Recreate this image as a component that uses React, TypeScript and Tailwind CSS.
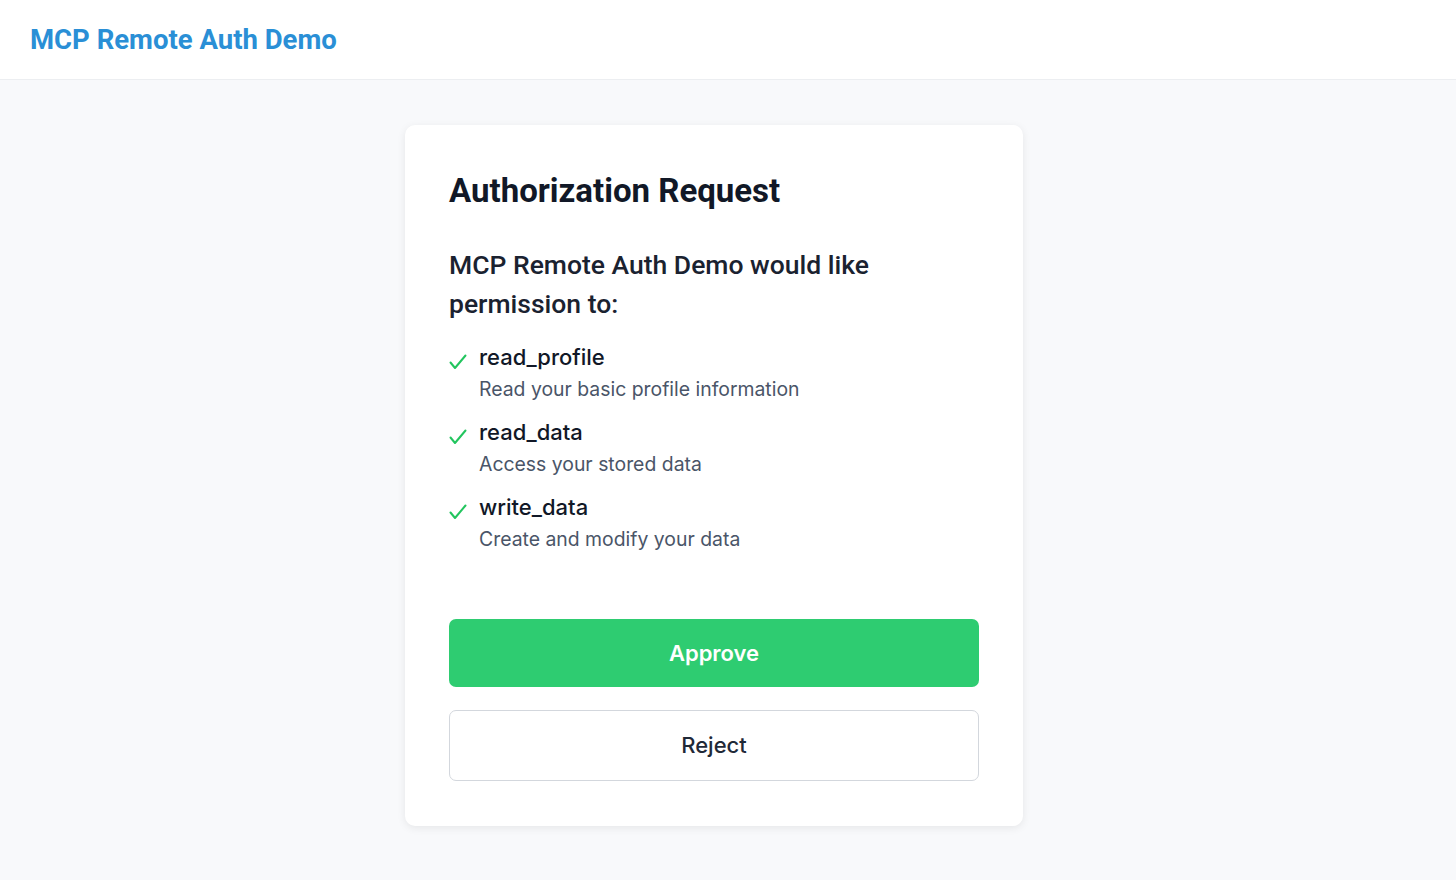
const scopes = [
  { name: "read_profile", description: "Read your basic profile information" },
  { name: "read_data", description: "Access your stored data" },
  { name: "write_data", description: "Create and modify your data" },
];

function Check() {
  return (
    <svg
      viewBox="0 0 18 16"
      className="h-[16px] w-[18px] text-[#22c55e]"
      fill="none"
      stroke="currentColor"
      strokeWidth="2"
      strokeLinecap="round"
      strokeLinejoin="round"
    >
      <polyline points="1.5,8.5 6,14 16.5,1.5" />
    </svg>
  );
}

export default function App() {
  return (
    <div className="min-h-screen bg-[#f8f9fb] font-['Inter',sans-serif]">
      <header className="h-[80px] bg-white border-b border-[#eceef1] flex items-center px-[30px]">
        <h1 className="font-['Roboto',sans-serif] font-bold text-[27.5px] text-[#2a8fd6]">
          MCP Remote Auth Demo
        </h1>
      </header>

      <main className="flex justify-center pt-[45px] pr-[28px]">
        <div className="w-[618px] bg-white rounded-[10px] shadow-[0_2px_8px_rgba(0,0,0,0.08)] px-[44px] pt-[45px] pb-[45px]">
          <h2 className="font-['Roboto',sans-serif] font-bold text-[33px] leading-[42px] text-[#111827]">
            Authorization Request
          </h2>
          <p className="mt-[33px] font-['Roboto',sans-serif] font-medium text-[26.5px] leading-[39px] text-[#1a2230] w-[440px]">
            MCP Remote Auth Demo would like permission to:
          </p>

          <ul className="mt-[18px] flex flex-col gap-[11px]">
            {scopes.map((s) => (
              <li key={s.name} className="flex gap-[12px]">
                <div className="pt-[13px]">
                  <Check />
                </div>
                <div>
                  <div className="text-[22px] leading-[32px] font-medium text-[#111827]">
                    {s.name}
                  </div>
                  <div className="text-[19.4px] leading-[32px] text-[#4a5568]">
                    {s.description}
                  </div>
                </div>
              </li>
            ))}
          </ul>

          <div className="mt-[64px] flex flex-col gap-[23px]">
            <button className="h-[68px] w-full rounded-[7px] bg-[#2ecc71] text-white text-[22px] font-semibold">
              Approve
            </button>
            <button className="h-[71px] w-full rounded-[7px] bg-white border border-[#d3d7dd] text-[#1f2937] text-[22px] font-medium">
              Reject
            </button>
          </div>
        </div>
      </main>
    </div>
  );
}
